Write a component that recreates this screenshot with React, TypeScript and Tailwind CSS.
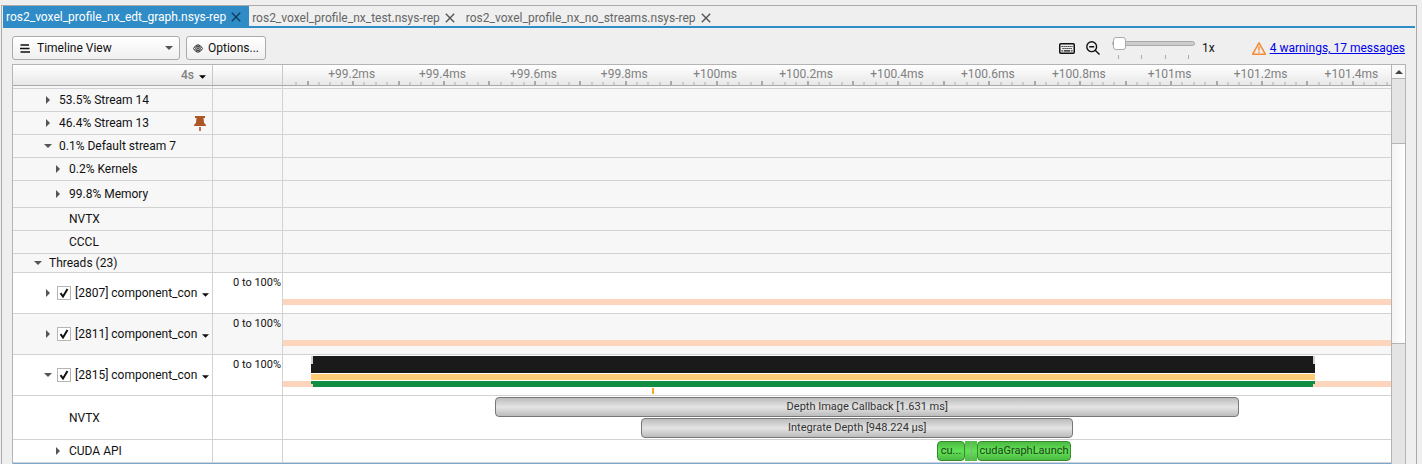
import React from "react";

const VIEW_START = 99.048;
const VIEW_SPAN = 2.438;

const pos = (ms: number) => `${((ms - VIEW_START) / VIEW_SPAN) * 100}%`;
const len = (ms: number) => `${(ms / VIEW_SPAN) * 100}%`;

const LABELS = [
  "+99.2ms", "+99.4ms", "+99.6ms", "+99.8ms", "+100ms", "+100.2ms",
  "+100.4ms", "+100.6ms", "+100.8ms", "+101ms", "+101.2ms", "+101.4ms",
];
const TICKS = Array.from({ length: 97 }, (_, i) => i - 5).filter((k) => k <= 91);

function Cross() {
  return (
    <svg width="10" height="10" viewBox="0 0 10 10" fill="none" stroke="currentColor" strokeWidth="1.4" aria-hidden="true">
      <path d="M0.8 0.8 9.2 9.2M9.2 0.8 0.8 9.2" />
    </svg>
  );
}

function Tab({ name, active }: { name: string; active?: boolean }) {
  return (
    <div
      className={
        active
          ? "flex h-[22px] items-center gap-[5px] bg-[#308cc6] pr-2 pl-[3px] text-white"
          : "flex h-5 items-center gap-[5px] pt-1 pr-2 pl-[3px] text-[#666]"
      }
    >
      <button role="tab" aria-selected={!!active} className="leading-4">{name}</button>
      <button aria-label={`Close ${name}`} className={active ? "text-[#0f3d5c]" : "text-[#555]"}>
        <Cross />
      </button>
    </div>
  );
}

function Down({ className }: { className?: string }) {
  return (
    <svg width="8" height="4" viewBox="0 0 8 4" className={className} fill="currentColor" aria-hidden="true">
      <path d="M0 0h8L4 4z" />
    </svg>
  );
}

function Expander({ open, name }: { open: boolean; name: string }) {
  return (
    <button aria-label={name} aria-expanded={open} className="flex w-2 shrink-0 items-center justify-center text-[#555]">
      {open ? (
        <Down className="shrink-0" />
      ) : (
        <svg width="4" height="8" viewBox="0 0 4 8" fill="currentColor" aria-hidden="true">
          <path d="M0 0v8l4-4z" />
        </svg>
      )}
    </button>
  );
}

type RowProps = {
  label?: string;
  indent?: string;
  open?: boolean;
  height: string;
  white?: boolean;
  thread?: boolean;
  pinned?: boolean;
  children?: React.ReactNode;
};

function Row({ label, indent = "", open, height, white, thread, pinned, children }: RowProps) {
  return (
    <div role="row" className={`flex border-b border-[#d2d2d2] ${height} ${white ? "bg-white" : "bg-[#f7f7f7]"}`}>
      <div role="rowheader" className={`flex w-[200px] shrink-0 items-center border-r border-[#d2d2d2] pr-[3px] ${indent}`}>
        {open !== undefined && label && <Expander open={open} name={`Toggle ${label}`} />}
        {thread ? (
          <label className="ml-[5px] flex min-w-0 flex-1 items-center">
            <span className="relative flex">
              <input type="checkbox" defaultChecked className="peer size-3.5 appearance-none border border-[#b5b5b5] bg-white" />
              <svg viewBox="0 0 14 14" className="pointer-events-none absolute inset-0 hidden size-3.5 peer-checked:block" fill="none" stroke="#111" strokeWidth="2" aria-hidden="true">
                <path d="M3.5 7.2 6 10.5 10.5 3" />
              </svg>
            </span>
            <span className="ml-1 whitespace-nowrap">{label}</span>
          </label>
        ) : (
          label && <span className="ml-[7px] flex-1 whitespace-nowrap">{label}</span>
        )}
        {thread && (
          <button aria-label={`${label} menu`} className="pt-1">
            <Down className="w-[7px]" />
          </button>
        )}
        {pinned && (
          <button aria-label="Unpin" className="mr-[3px]">
            <svg width="12" height="15" viewBox="0 0 12 15" fill="#ad5727" aria-hidden="true">
              <path d="M1 0h10v2H9.500l.6 5Q12 8 12 10H0Q0 8 1.900 7L2.500 2H1zM5.200 11h1.600v4H5.200z" />
            </svg>
          </button>
        )}
      </div>
      <div className="w-[70px] shrink-0 border-r border-[#d2d2d2] pt-0.5 pr-px text-right text-[11px] leading-4">
        {thread && "0 to 100%"}
      </div>
      <div className="relative min-w-0 flex-1 overflow-hidden">{children}</div>
    </div>
  );
}

function IdleBand() {
  return <div className="absolute inset-x-0 top-[26px] h-1.5 bg-[#fdd5bc]" />;
}

function Span({ start, duration, tone, className, children }: {
  start: number; duration: number; tone: "gray" | "green"; className: string; children: React.ReactNode;
}) {
  const colors = tone === "gray"
    ? "border-[#777] bg-linear-to-b from-[#bcbcbc] via-[#e4e4e4] to-[#bcbcbc] text-[#333]"
    : "border-[#348a2c] bg-linear-to-b from-[#4dbb43] via-[#62e256] to-[#4dbb43] text-[#1d4519]";
  return (
    <div
      className={`absolute h-5 overflow-hidden rounded border text-center text-[11px] leading-[18px] whitespace-nowrap ${colors} ${className}`}
      style={{ left: pos(start), width: len(duration) }}
    >
      {children}
    </div>
  );
}

function Ruler() {
  return (
    <div className="flex h-[21px] border-b border-[#a8a8a8] bg-linear-to-b from-white to-[#e8e8e8] text-[#808080]">
      <div className="flex w-[200px] shrink-0 items-center justify-end gap-[5px] border-r border-[#c8c8c8] pr-1.5">
        <span className="font-medium">4s</span>
        <button aria-label="Time unit" className="pt-1 text-black"><Down className="w-[7px]" /></button>
      </div>
      <div className="w-[70px] shrink-0 border-r border-[#c8c8c8]" />
      <div className="relative min-w-0 flex-1 overflow-hidden">
        {TICKS.map((k) => (
          <span
            key={k}
            className={`absolute bottom-0 w-0.5 ${k % 4 === 0 ? "h-1 bg-[#aaa]" : "h-[3px] bg-[#ccc]"}`}
            style={{ left: pos(99.2 + k * 0.025) }}
          />
        ))}
        {LABELS.map((text, i) => (
          <span key={text} className="absolute top-px -translate-x-1/2 leading-4" style={{ left: pos(99.199 + i * 0.2) }}>
            {text}
          </span>
        ))}
      </div>
    </div>
  );
}

function Toolbar() {
  return (
    <div className="flex h-9 items-center pt-1 pr-2.5 pl-[9px]">
      <div className="relative">
        <svg width="10" height="9" viewBox="0 0 10 9" className="pointer-events-none absolute top-2 left-2" stroke="#111" strokeWidth="1.3" aria-hidden="true">
          <path d="M0.500 1H9M0 4.500H9.500M0.500 8H10" />
        </svg>
        <select aria-label="View" className="h-6 w-[168px] appearance-none rounded-[3px] border border-[#ababab] bg-linear-to-b from-white to-[#f0f0f0] pl-6">
          <option>Timeline View</option>
        </select>
        <Down className="pointer-events-none absolute top-2.5 right-[7px] text-[#555]" />
      </div>
      <button className="ml-1.5 flex h-6 w-20 items-center gap-[5px] rounded-[3px] border border-[#ababab] bg-linear-to-b from-white to-[#f0f0f0] pl-1.5">
        <svg width="10" height="9" viewBox="0 0 10 9" fill="none" stroke="#222" strokeWidth="1" aria-hidden="true">
          <path d="M.4 4.500Q5-3 9.600 4.500Q5 12 .4 4.500z" />
          <circle cx="5" cy="4.500" r="2.300" />
          <circle cx="5" cy="4.500" r=".8" />
        </svg>
        Options...
      </button>
      <div className="ml-auto flex items-center">
        <button aria-label="Keyboard shortcuts">
          <svg width="16" height="11" viewBox="0 0 16 11" aria-hidden="true">
            <rect x=".75" y=".75" width="14.500" height="9.500" rx="1" fill="none" stroke="#111" strokeWidth="1.500" />
            <path d="M2.500 3.500h11M3.500 5.500h10" stroke="#111" strokeWidth="1.200" strokeDasharray="1.200 .8" />
            <path d="M2.500 7.800h1.300M4.800 7.800h6.400M12.200 7.800h1.300" stroke="#111" strokeWidth="1.200" />
          </svg>
        </button>
        <button aria-label="Zoom out" className="ml-[11px]">
          <svg width="14" height="14" viewBox="0 0 14 14" fill="none" stroke="#111" strokeWidth="1.400" aria-hidden="true">
            <circle cx="5.700" cy="5.700" r="4.900" />
            <path d="M3.200 5.700h5M9.200 9.200l4.300 4.300" />
          </svg>
        </button>
        <div className="ml-3 flex w-[83px] flex-col">
          <input
            type="range"
            aria-label="Zoom"
            min={1}
            max={100}
            defaultValue={1}
            className="h-3 w-full appearance-none bg-transparent [&::-webkit-slider-runnable-track]:h-[5px] [&::-webkit-slider-runnable-track]:rounded-sm [&::-webkit-slider-runnable-track]:border [&::-webkit-slider-runnable-track]:border-[#aaa] [&::-webkit-slider-runnable-track]:bg-[#ccc] [&::-webkit-slider-thumb]:-mt-[5px] [&::-webkit-slider-thumb]:size-[13px] [&::-webkit-slider-thumb]:appearance-none [&::-webkit-slider-thumb]:rounded-[3px] [&::-webkit-slider-thumb]:border [&::-webkit-slider-thumb]:border-[#aaa] [&::-webkit-slider-thumb]:bg-white"
          />
          <div className="mt-1.5 flex justify-between pr-1.5 pl-1.5">
            {[0, 1, 2, 3].map((n) => <span key={n} className="h-1 w-px bg-[#aaa]" />)}
          </div>
        </div>
        <span className="ml-[7px]">1x</span>
        <svg width="14" height="13" viewBox="0 0 14 13" className="ml-[37px]" fill="none" stroke="#f58a35" strokeWidth="1.500" strokeLinejoin="round" aria-hidden="true">
          <path d="M7 .9 13.300 12.200H.7zM7 4.500v4M7 9.500v1.300" />
        </svg>
        <a href="#messages" className="ml-1 text-[#0000ee] underline">4 warnings, 17 messages</a>
      </div>
    </div>
  );
}

export default function App() {
  return (
    <div className="flex min-h-screen flex-col bg-[#efefef] pt-[5px] pr-[5px] pl-px font-[Roboto,sans-serif] text-xs text-[#111]">
      <div className="flex flex-1 flex-col border-x border-t border-[#aaa] px-px">
        <div role="tablist" className="flex items-start border-b-2 border-[#308cc6]">
          <div className="-mb-0.5"><Tab name="ros2_voxel_profile_nx_edt_graph.nsys-rep" active /></div>
          <Tab name="ros2_voxel_profile_nx_test.nsys-rep" />
          <Tab name="ros2_voxel_profile_nx_no_streams.nsys-rep" />
        </div>
        <Toolbar />
        <div className="mx-[9px] flex flex-1 border-x border-t border-[#b4b4b4] bg-white">
          <div role="treegrid" aria-label="Timeline" className="min-w-0 flex-1">
            <Ruler />
            <Row height="h-[3px]" />
            <Row label="53.5% Stream 14" indent="pl-[31px]" open={false} height="h-[23px]" />
            <Row label="46.4% Stream 13" indent="pl-[31px]" open={false} height="h-[23px]" pinned />
            <Row label="0.1% Default stream 7" indent="pl-[31px]" open height="h-[23px]" />
            <Row label="0.2% Kernels" indent="pl-[41px]" open={false} height="h-[23px]" />
            <Row label="99.8% Memory" indent="pl-[41px]" open={false} height="h-[27px]" />
            <Row label="NVTX" indent="pl-[49px]" height="h-[23px]" />
            <Row label="CCCL" indent="pl-[49px]" height="h-[23px]" />
            <Row label="Threads (23)" indent="pl-[21px]" open height="h-[19px]" />
            <Row label="[2807] component_con" indent="pl-[31px]" open={false} height="h-[41px]" white thread><IdleBand /></Row>
            <Row label="[2811] component_con" indent="pl-[31px]" open={false} height="h-[41px]" thread><IdleBand /></Row>
            <Row label="[2815] component_con" indent="pl-[31px]" open height="h-[41px]" white thread>
              <IdleBand />
              <div className="absolute top-px" style={{ left: pos(99.11), width: len(2.209) }}>
                <div className="h-2 border-x-2 border-[#d2d2d2] bg-[#1a1a1a]" />
                <div className="h-[9px] bg-[#1a1a1a]" />
                <div className="mt-px h-1.5 bg-[#ffcb77]" />
                <div className="mt-px h-[3px] bg-[#118e43]" />
                <div className="mx-0.5 h-[3px] bg-[#118e43]" />
              </div>
              <div className="absolute top-[33px] h-1.5 w-0.5 bg-[#f5a81c]" style={{ left: pos(99.859) }} />
            </Row>
            <Row label="NVTX" indent="pl-[49px]" height="h-[44px]" white>
              <Span start={99.515} duration={1.637} tone="gray" className="top-px">Depth Image Callback [1.631 ms]</Span>
              <Span start={99.836} duration={0.951} tone="gray" className="top-[22px]">Integrate Depth [948.224 µs]</Span>
            </Row>
            <Row label="CUDA API" indent="pl-[41px]" open={false} height="h-[23px]" white>
              <Span start={100.487} duration={0.062} tone="green" className="top-px">cu...</Span>
              <div className="absolute top-px flex h-5 gap-px bg-[#8fa88d]" style={{ left: pos(100.549), width: len(0.026) }}>
                <span className="flex-1 bg-linear-to-b from-[#4dbb43] via-[#62e256] to-[#4dbb43]" />
                <span className="flex-1 bg-linear-to-b from-[#4dbb43] via-[#62e256] to-[#4dbb43]" />
              </div>
              <Span start={100.575} duration={0.207} tone="green" className="top-px">cudaGraphLaunch</Span>
            </Row>
            <div className="h-px bg-[#7aa7cf]" />
          </div>
          <div className="flex w-3.5 shrink-0 flex-col border-l border-[#b4b4b4] bg-[#e4e4e4]">
            <button aria-label="Scroll up" className="flex h-3.5 items-center justify-center border-b border-[#b4b4b4] bg-[#f8f8f8] text-[#444]">
              <Down className="rotate-180" />
            </button>
            <div className="mt-16 h-[201px] border-y border-[#b4b4b4] bg-linear-to-r from-[#f4f4f4] to-white" />
          </div>
        </div>
      </div>
    </div>
  );
}
